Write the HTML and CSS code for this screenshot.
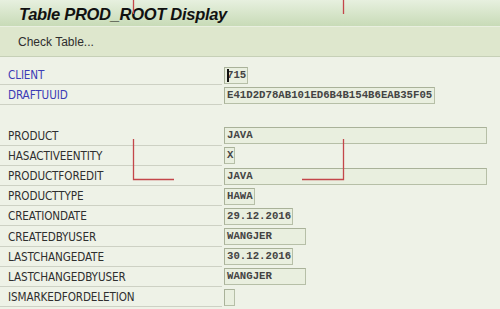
FILE: index.html
```html
<!DOCTYPE html>
<html lang="en">
<head>
  <meta charset="UTF-8" />
  <title>Table PROD_ROOT Display</title>
  <link rel="stylesheet" href="styles.css">
</head>
<body>

  <header class="title-bar">Table PROD_ROOT Display</header>

  <div class="toolbar">
    <span class="tool-btn">Check Table...</span>
  </div>

  <div class="content">
    <div class="row">
      <div class="label key">CLIENT</div>
      <div class="field w3"><span class="cursor"></span>715</div>
    </div>
    <div class="row">
      <div class="label key">DRAFTUUID</div>
      <div class="field w32">E41D2D78AB101ED6B4B154B6EAB35F05</div>
    </div>
    <div class="row blank"></div>
    <div class="row">
      <div class="label">PRODUCT</div>
      <div class="field w40">JAVA</div>
    </div>
    <div class="row">
      <div class="label">HASACTIVEENTITY</div>
      <div class="field w1">X</div>
    </div>
    <div class="row">
      <div class="label">PRODUCTFOREDIT</div>
      <div class="field w40">JAVA</div>
    </div>
    <div class="row">
      <div class="label">PRODUCTTYPE</div>
      <div class="field w4">HAWA</div>
    </div>
    <div class="row">
      <div class="label">CREATIONDATE</div>
      <div class="field w10">29.12.2016</div>
    </div>
    <div class="row">
      <div class="label">CREATEDBYUSER</div>
      <div class="field w12">WANGJER</div>
    </div>
    <div class="row">
      <div class="label">LASTCHANGEDATE</div>
      <div class="field w10">30.12.2016</div>
    </div>
    <div class="row">
      <div class="label">LASTCHANGEDBYUSER</div>
      <div class="field w12">WANGJER</div>
    </div>
    <div class="row">
      <div class="label">ISMARKEDFORDELETION</div>
      <div class="field w1"></div>
    </div>
    <div class="row">
      <div class="label"></div>
      <div class="field w1"></div>
    </div>
  </div>

  <!-- red markers drawn over the screenshot -->
  <svg class="marks" width="500" height="309" viewBox="0 0 500 309">
    <path d="M133.5 0 V14" />
    <path d="M343.5 0 V14" />
    <path d="M133.5 139 V179.5 H174" />
    <path d="M343.5 139 V179.5 H302" />
  </svg>

</body>
</html>
```

FILE: styles.css
```css
body {
  margin: 0;
  width: 500px;
  height: 309px;
  overflow: hidden;
  background-color: #eef2e7;
  font-family: "Liberation Sans", Arial, sans-serif;
  color: #333;
  position: relative;
}

.title-bar {
  height: 27px;
  box-sizing: border-box;
  padding: 5px 0 0 19px;
  background: linear-gradient(#e7f0df, #c8dbb7);
  border-bottom: 1px solid #e9efe0;
  font-size: 16.5px;
  font-weight: bold;
  font-style: italic;
  letter-spacing: -0.3px;
  color: #111;
}

.toolbar {
  height: 30px;
  box-sizing: border-box;
  display: flex;
  align-items: center;
  padding-left: 18px;
  background-color: #dee7cd;
  border-bottom: 1px solid #c6d0b7;
}

.tool-btn {
  font-size: 12px;
  color: #2e2e2e;
}

.content {
  height: 252px;
  box-sizing: border-box;
  overflow: hidden;
  padding-top: 8px;
}

.row {
  display: flex;
  align-items: center;
  height: 20.2px;
  gap: 2px;
}

.label {
  width: 222px;
  height: 20px;
  line-height: 20px;
  box-sizing: border-box;
  padding-left: 8px;
  border-bottom: 1px solid #cdd1c4;
  font-family: "DejaVu Sans Condensed", "DejaVu Sans", sans-serif;
  font-size: 11.6px;
  letter-spacing: -0.1px;
  color: #2f2f2f;
}

.label.key {
  color: #3c3cb6;
}

.field {
  height: 17px;
  box-sizing: border-box;
  padding-left: 2px;
  border: 1px solid #b6bfa7;
  border-top-color: #a9b299;
  border-left-color: #a9b299;
  background-color: #e9efdf;
  font-family: "Liberation Mono", "Courier New", monospace;
  font-size: 10.7px;
  font-weight: bold;
  line-height: 15px;
  color: #444;
  white-space: nowrap;
  position: relative;
}

.w1 { width: calc(1ch + 5px); }
.w3 { width: calc(3ch + 5px); }
.w4 { width: calc(4ch + 5px); }
.w10 { width: calc(10ch + 5px); }
.w12 { width: calc(12ch + 5px); }
.w32 { width: calc(32ch + 6px); }
.w40 { width: calc(40ch + 6px); }

.cursor {
  position: absolute;
  left: 2px;
  top: 1px;
  width: 2px;
  height: 13px;
  background-color: #111;
}

.marks {
  position: absolute;
  left: 0;
  top: 0;
  pointer-events: none;
}

.marks path {
  fill: none;
  stroke: #c4464a;
  stroke-width: 1.3;
}
```
